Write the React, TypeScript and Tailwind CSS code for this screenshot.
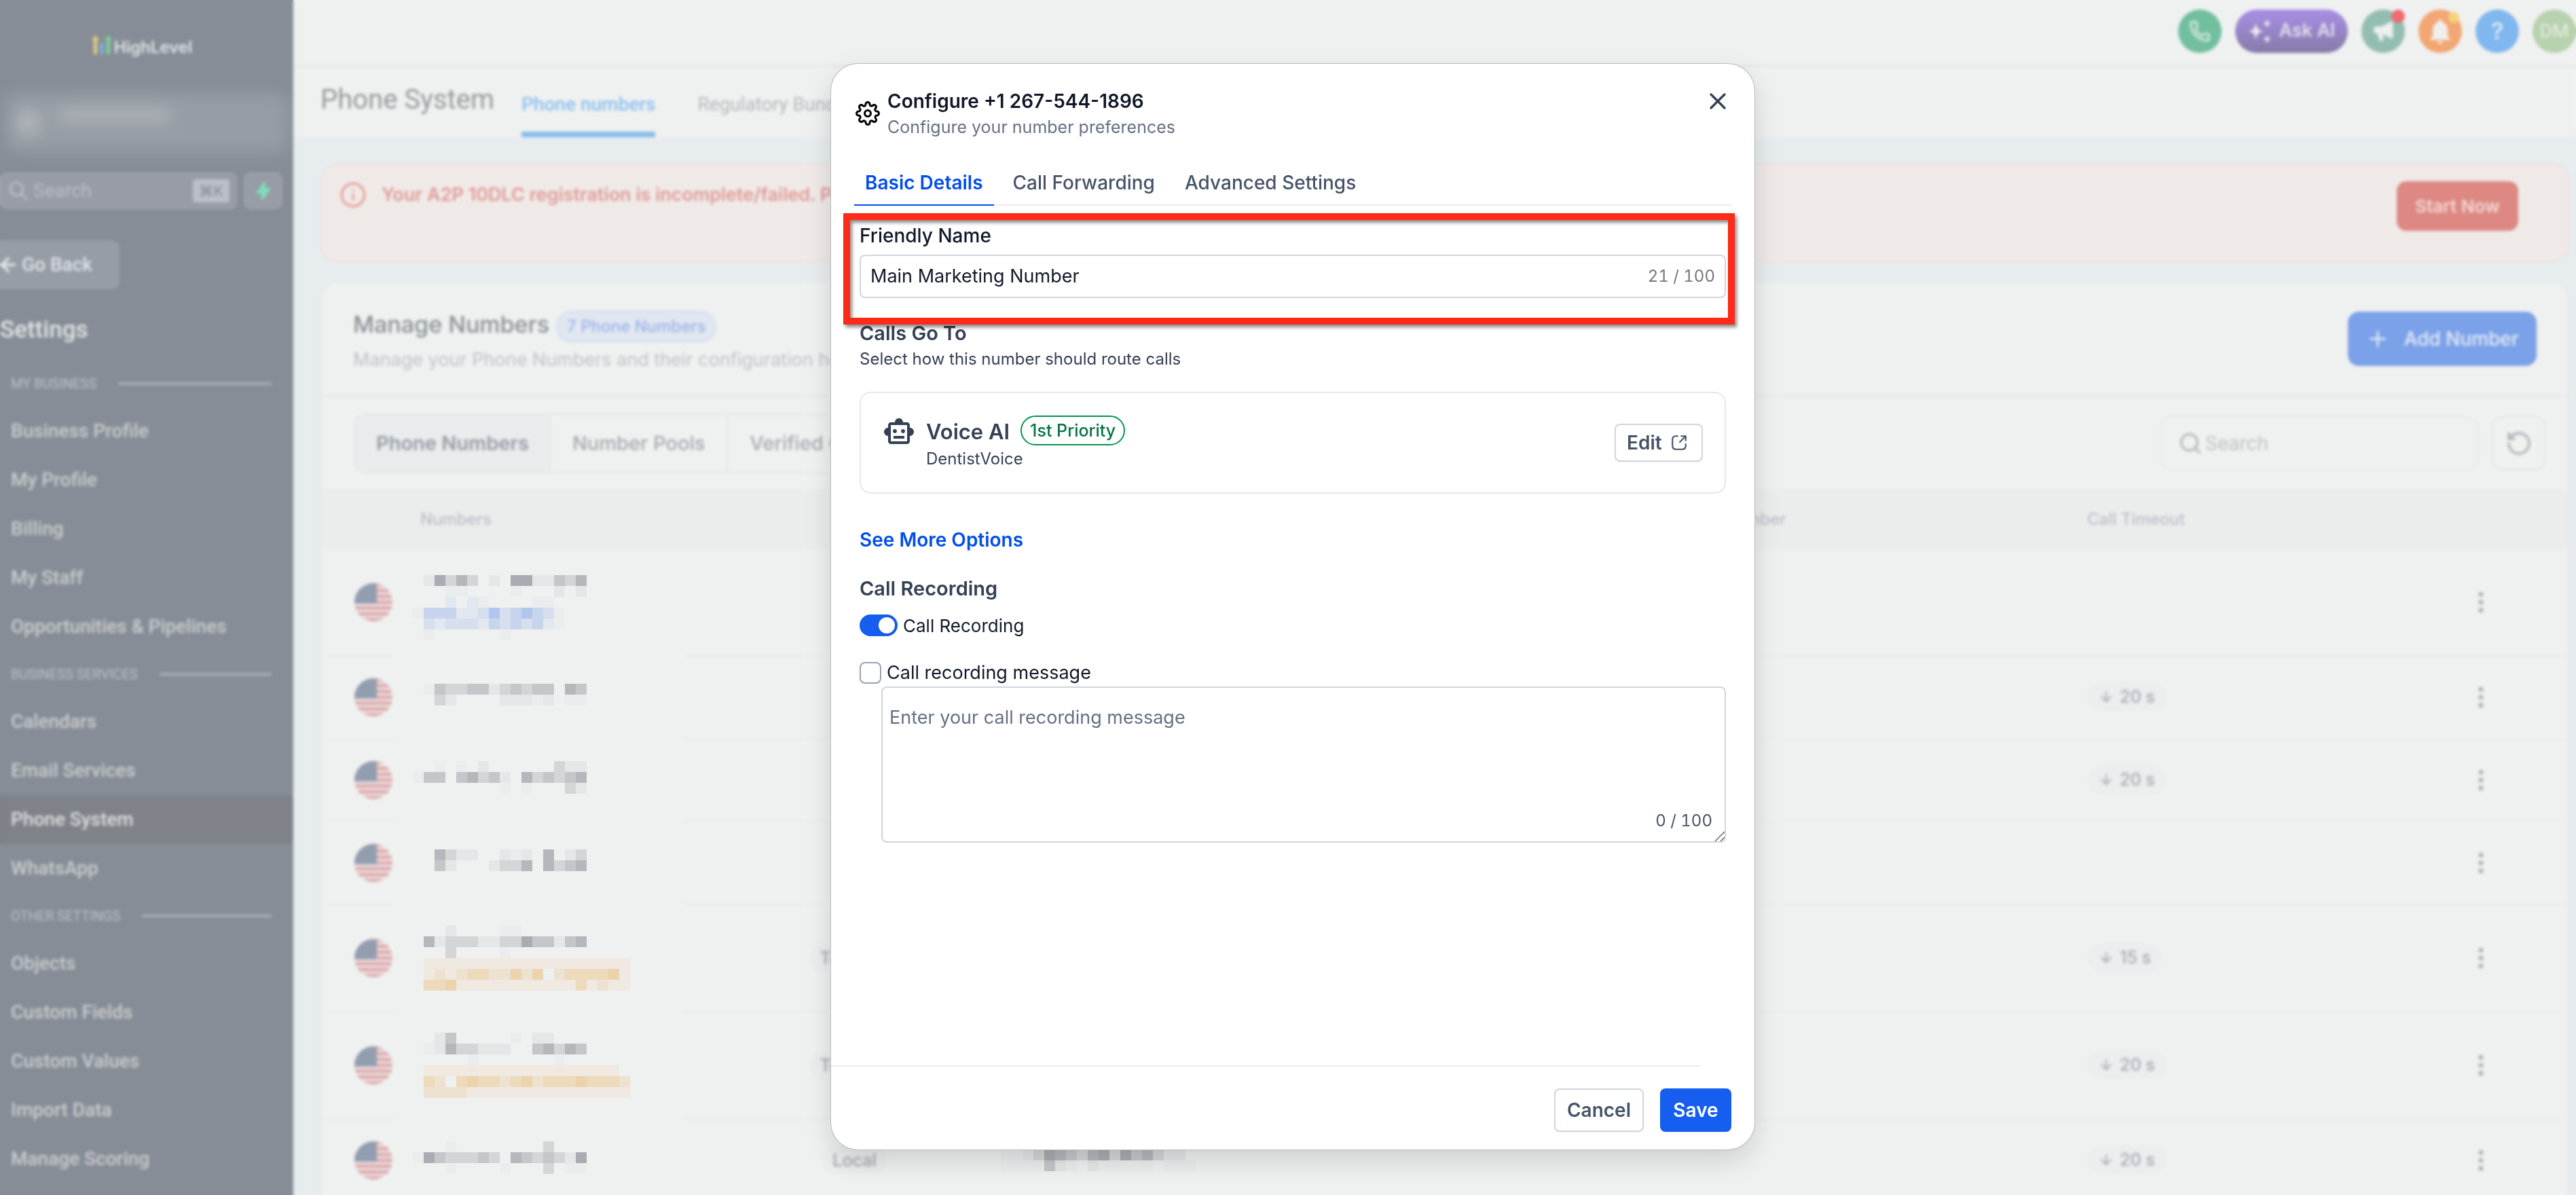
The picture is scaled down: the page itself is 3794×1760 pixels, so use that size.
import { useState } from "react";
import clsx from "clsx";
import { ArrowDown, ArrowLeft, EllipsisVertical, Info, Phone, Plus, RotateCcw, Search, X } from "lucide-react";
import { FiSettings } from "react-icons/fi";
import { HiLightningBolt, HiOutlineSearch, HiSpeakerphone } from "react-icons/hi";
import { MdNotifications, MdOutlineSmartToy } from "react-icons/md";

const sidebarGroups = [
  {
    title: "My Business",
    items: ["Business Profile", "My Profile", "Billing", "My Staff", "Opportunities & Pipelines"],
  },
  { title: "Business Services", items: ["Calendars", "Email Services", "Phone System", "WhatsApp"] },
  {
    title: "Other Settings",
    items: ["Objects", "Custom Fields", "Custom Values", "Import Data", "Manage Scoring"],
  },
];

// Each character is one 16px block of a redacted value
const blockColors: Record<string, string> = {
  a: "#a9acb2",
  b: "#b4b8bd",
  c: "#c4c7ca",
  d: "#d3d5d7",
  e: "#e4e6e8",
  f: "#eaecee",
  p: "#b1c6ec",
  q: "#c6d4ee",
  r: "#d7dfee",
  s: "#e2e8f0",
  w: "#ebd3ab",
  x: "#ecdabb",
  y: "#ede1cf",
  z: "#efe9e1",
};

type NumberRow = {
  blocks: string[];
  type?: string;
  detail?: string[];
  timeout?: string;
  tall?: boolean;
};

const rows: NumberRow[] = [
  {
    tall: true,
    blocks: [
      "                 ",
      "  eadbd e aaeecdb",
      "    ff    f   e e",
      "    s sf    ff   ",
      " fqqqssrprqpqrf  ",
      "  rsrrrsqrqrqsf  ",
      "  f      f       ",
    ],
  },
  {
    blocks: ["  fcddccedcdcc bc", "   de    eeefe ff"],
    timeout: "20 s",
  },
  {
    blocks: ["   f f e      dee", " fcc cbdce bdcdcb", "         f f   de"],
    timeout: "20 s",
  },
  { blocks: ["   bdee  efe b ed", "   ce   eddb bdcb"] },
  {
    tall: true,
    blocks: [
      "    e    ff      ",
      "  bedddeeddaccecb",
      "    d    f       ",
      "  zzzzzzzzzzzzzzzzzzz",
      "  zyzyxxyywyw yxxxxwz",
      "  xxwzzzzzzzzzzzxzyzz",
    ],
    type: "Toll Free",
    timeout: "15 s",
  },
  {
    tall: true,
    blocks: [
      "   ec     f ee   ",
      "  febddeee  cbdbc",
      "      f       f  ",
      "  zzzzzzzzzzzzzzzzzz ",
      "  xy xwxxyxwyxxxwxxxy",
      "  yyyyzzzzzzzzzzzzzzz",
    ],
    type: "Toll Free",
    timeout: "20 s",
  },
  {
    blocks: ["    f        d   ", " facdddcd bcdcdea", "    f    f   d ff"],
    type: "Local",
    detail: ["ffedabcdbadacbdee", "ffffcef efffff fff"],
    timeout: "20 s",
  },
];

function Blocks({ lines }: { lines: string[] }) {
  const cols = Math.max(...lines.map((line) => line.length));
  return (
    <svg
      width={cols * 16}
      height={lines.length * 16}
      viewBox={`0 0 ${cols} ${lines.length}`}
      shapeRendering="crispEdges"
      className="relative z-20 block"
      aria-hidden="true"
    >
      {lines.map((line, y) =>
        line
          .split("")
          .map((c, x) => (c === " " ? null : <rect key={`${x}-${y}`} x={x} y={y} width={1} height={1} fill={blockColors[c]} />))
      )}
    </svg>
  );
}

function Flag() {
  return (
    <svg viewBox="0 0 56 56" className="block size-14" role="img" aria-label="United States">
      <clipPath id="flag-clip">
        <circle cx="28" cy="28" r="28" />
      </clipPath>
      <g clipPath="url(#flag-clip)">
        <rect width="56" height="56" fill="#ecdfe0" />
        {[0, 1, 2, 3, 4, 5, 6].map((i) => (
          <rect key={i} y={i * 8.6} width="56" height="4.3" fill="#dba3a6" />
        ))}
        <rect width="33" height="30" fill="#929db0" />
      </g>
    </svg>
  );
}

function Logo() {
  return (
    <div className="flex items-start justify-center gap-[3px]">
      <svg width="30" height="28" viewBox="0 0 30 28" aria-hidden="true">
        <path d="M5.500 0 11 7H8V28H3V7H0z" fill="#e5cf79" />
        <path d="M15 10 20 16H17.500V28H12.500V16H10z" fill="#7fb0e0" />
        <path d="M24.500 0 30 7H27V28H22V7H19z" fill="#7ed39a" />
      </svg>
      <span className="pt-1 text-[24px] leading-7 font-semibold text-[#dfe2e4]">HighLevel</span>
    </div>
  );
}

function Sidebar() {
  return (
    <aside className="flex h-full w-[432px] shrink-0 flex-col overflow-hidden bg-[#868d96] font-[Roboto,sans-serif]">
      <div className="pt-[52px] pr-[14px] font-[Inter,sans-serif]">
        <Logo />
      </div>

      <div className="mx-2 mt-[54px] flex h-[86px] items-center gap-6 rounded-xl bg-[#969da5] px-4 blur-md">
        <span className="size-9 rounded-full bg-[#b4b8ba]" />
        <span className="mb-6 h-5 w-[168px] rounded-full bg-[#b0b4b7]" />
      </div>

      <div className="mt-[30px] flex gap-[10px]">
        <label className="flex h-[54px] w-[349px] items-center gap-[6px] rounded-[10px] border-2 border-[#9ea3ab] bg-[#979ca5] px-[9px]">
          <HiOutlineSearch className="size-8 shrink-0 text-[#bcc1c7]" />
          <input
            type="text"
            placeholder="Search"
            aria-label="Search menu"
            className="w-0 flex-1 text-[28px] leading-8 outline-none placeholder:text-[#b9bec4]"
          />
          <kbd className="flex h-[34px] w-[54px] items-center justify-center rounded-[4px] bg-[#bbc0c8] font-[Inter,'DejaVu_Sans',sans-serif] text-[22px] text-[#858b92]">
            ⌘K
          </kbd>
        </label>
        <button
          type="button"
          aria-label="Quick actions"
          className="flex h-[54px] w-[57px] items-center justify-center rounded-[10px] border-2 border-[#9ea3ab] bg-[#979ca5]"
        >
          <HiLightningBolt className="size-[30px] text-[#7fdcb8]" />
        </button>
      </div>

      <button
        type="button"
        className="mt-[46px] flex h-[72px] w-44 shrink-0 items-center rounded-r-xl bg-[#969da7] text-[28px] font-medium text-[#dfe2e4]"
      >
        <ArrowLeft className="-ml-1 mr-1 size-8" strokeWidth={3} />
        Go Back
      </button>

      <h2 className="mt-10 h-[65px] shrink-0 text-[35px] leading-[40px] font-medium text-[#dfe2e3]">Settings</h2>

      <nav>
        {sidebarGroups.map((group) => (
          <div key={group.title}>
            <div className="flex h-[68px] items-center gap-8 pr-8 pl-4">
              <h3 className="text-[20px] leading-8 text-[#bcc0c5] uppercase">{group.title}</h3>
              <span className="h-1 flex-1 bg-[#a8adb4]" />
            </div>
            {group.items.map((item) => (
              <a
                key={item}
                href="#"
                className={clsx(
                  "flex h-[72px] items-center rounded-r-lg pl-4 text-[28px] font-medium",
                  item === "Phone System" ? "bg-[#7f8289] text-[#dcdedf]" : "text-[#c9cccd]"
                )}
              >
                {item}
              </a>
            ))}
          </div>
        ))}
      </nav>
    </aside>
  );
}

function TopBar() {
  return (
    <div className="flex h-[99px] shrink-0 items-center justify-end gap-5 border-b-4 border-[#e7e9e8] pb-1">
      <button
        type="button"
        aria-label="Call"
        className="flex size-16 items-center justify-center rounded-full bg-[#72bf9f] text-[#e3efea]"
      >
        <Phone className="size-8" strokeWidth={2} />
      </button>
      <button
        type="button"
        className="flex h-16 w-[166px] items-center justify-center gap-3 rounded-full bg-linear-to-b from-[#a98ee6] to-[#877ba8] text-[27px] font-medium text-[#e9e6f1]"
      >
        <svg width="34" height="38" viewBox="0 0 34 36" fill="#eceaf2" aria-hidden="true">
          <path d="M11.500 5c1.500 9 3 11.500 11.500 13-8.500 1.500-10 4-11.500 13C10 22 8.500 19.500 0 18 8.500 16.500 10 14 11.500 5z" />
          <path d="M28 0c1 4 1.700 5.500 6 6.500-4.300 1-5 2.500-6 6.500-1-4-1.700-5.500-6-6.500C26.300 5.500 27 4 28 0z" />
          <path d="M28 23c1 4 1.700 5.500 6 6.500-4.300 1-5 2.500-6 6.500-1-4-1.700-5.500-6-6.500 4.300-1 5-2.500 6-6.500z" />
        </svg>
        Ask AI
      </button>
      <button
        type="button"
        aria-label="Announcements"
        className="relative flex size-16 items-center justify-center rounded-full bg-[#94bdb2] text-[#eaf0ee]"
      >
        <HiSpeakerphone className="size-9" />
        <span className="absolute top-0 right-0 size-5 rounded-full bg-[#ee6b6f]" />
      </button>
      <button
        type="button"
        aria-label="Notifications"
        className="relative flex size-16 items-center justify-center rounded-full bg-[#f2a673] text-[#f1efec]"
      >
        <MdNotifications className="size-11" />
        <span className="absolute top-1 right-1 size-4 rounded-full bg-[#f3d474]" />
      </button>
      <button
        type="button"
        aria-label="Help"
        className="flex size-16 items-center justify-center rounded-full bg-[#80b7ee] text-[34px] font-medium text-[#e3edf5]"
      >
        ?
      </button>
      <button
        type="button"
        aria-label="Account"
        className="flex size-16 items-center justify-center rounded-full bg-[#b8d1ae] font-[Roboto,sans-serif] text-[28px] text-[#e6ede3]"
      >
        DM
      </button>
    </div>
  );
}

function PageHeader() {
  return (
    <header className="flex h-[103px] shrink-0 items-stretch pl-10 font-[Roboto,sans-serif]">
      <h1 className="pt-6 text-[40px] leading-[48px] text-[#969a9c]">Phone System</h1>
      <nav className="ml-10 flex gap-[62px] text-[28px] leading-[40px]">
        <a href="#" className="border-b-8 border-[#86bbec] pt-[35px] font-medium text-[#8ec0ee]">
          Phone numbers
        </a>
        <a href="#" className="pt-[35px] text-[#b3b9ba]">
          Regulatory Bundles
        </a>
      </nav>
    </header>
  );
}

function Alert() {
  return (
    <section className="flex h-36 shrink-0 items-start rounded-3xl border-2 border-[#eedfde] bg-[#efeae8] pt-6 pr-[73px] pl-[26px]">
      <Info className="size-10 shrink-0 text-[#e59d98]" strokeWidth={2} />
      <p className="ml-[22px] flex-1 text-[27px] leading-10 font-semibold text-[#e09b97]">
        Your A2P 10DLC registration is incomplete/failed. Please
      </p>
      <button
        type="button"
        className="h-[73px] w-[179px] rounded-[14px] bg-[#dd8882] text-[26px] font-semibold text-[#f3d9d6]"
      >
        Start Now
      </button>
    </section>
  );
}

function NumbersTable() {
  return (
    <table className="w-full table-fixed border-separate border-spacing-0">
      <colgroup>
        <col className="w-[106px]" />
        <col className="w-[427px]" />
        <col className="w-[439px]" />
        <col />
        <col className="w-[659px]" />
        <col className="w-[541px]" />
        <col className="w-[184px]" />
      </colgroup>
      <thead className="bg-[#ebedec] text-left text-[24px] text-[#bbc0ca] [&_th]:h-[88px] [&_th]:border-y-2 [&_th]:border-[#e8eaec] [&_th]:font-medium">
        <tr>
          <th />
          <th className="pl-[39px]">Numbers</th>
          <th className="pl-16 text-center">Type</th>
          <th className="pl-7">Forward To</th>
          <th className="pl-1">Forwarding Number</th>
          <th className="pl-[17px]">Call Timeout</th>
          <th />
        </tr>
      </thead>
      <tbody className="text-[25px] font-medium text-[#a7abaf] [&_td]:border-b-2 [&_td]:border-[#e9ebec]">
        {rows.map((row, i) => (
          <tr key={i} className={row.tall ? "h-[158px]" : "h-[122px]"}>
            <td className="pl-12">
              <Flag />
            </td>
            <td className="border-transparent! pl-[12px]">
              <div className={row.tall ? "" : "pb-2"}>
                <Blocks lines={row.blocks} />
              </div>
            </td>
            <td className="pl-16 text-center">
              {row.type && <span className="inline-block rounded-full bg-[#ebedef] px-4 leading-[42px]">{row.type}</span>}
            </td>
            <td className="pl-7">{row.detail && <Blocks lines={row.detail} />}</td>
            <td />
            <td className="pl-[17px]">
              {row.timeout && (
                <span className="inline-flex h-[42px] items-center gap-2 rounded-full bg-[#ebedef] px-4">
                  <ArrowDown className="size-6" />
                  {row.timeout}
                </span>
              )}
            </td>
            <td className="pl-9">
              <button type="button" aria-label="More actions" className="block">
                <EllipsisVertical className="size-10" fill="currentColor" />
              </button>
            </td>
          </tr>
        ))}
      </tbody>
    </table>
  );
}

function NumbersCard() {
  return (
    <section className="mt-8 min-h-0 flex-1 overflow-hidden rounded-t-3xl border-x-2 border-[#e3e7e9] bg-[#eff1f0]">
      <div className="flex h-[168px] items-start justify-between border-b-4 border-[#e8eaec] pt-[38px] pr-[46px] pl-[46px]">
        <div>
          <div className="flex items-start gap-[10px]">
            <h2 className="text-[34px] leading-[46px] font-medium text-[#8b9197]">Manage Numbers</h2>
            <span className="mt-[3px] rounded-full border-2 border-[#cfdbf1] bg-[#e1e7f0] px-[14px] text-[24px] leading-[42px] font-medium text-[#9db4ea]">
              7 Phone Numbers
            </span>
          </div>
          <p className="mt-[6px] text-[27px] leading-[40px] text-[#bfc4cb]">
            Manage your Phone Numbers and their configuration here
          </p>
        </div>
        <button
          type="button"
          className="mt-1 flex h-20 w-[278px] items-center justify-center gap-5 rounded-2xl bg-[#7ba1e9] text-[28px] font-medium text-[#e4ebf5]"
        >
          <Plus className="size-9" strokeWidth={2} />
          Add Number
        </button>
      </div>

      <div className="flex h-[136px] items-center justify-between pr-8 pl-12">
        <div className="flex h-[88px] overflow-hidden rounded-2xl border-2 border-[#e3e5e8] text-[29px] font-medium text-[#a6abb1]">
          <button type="button" className="border-r-2 border-[#e3e5e8] bg-[#e9ebed] px-[30px] font-semibold text-[#979da4]">
            Phone Numbers
          </button>
          <button type="button" className="border-r-2 border-[#e3e5e8] px-8">
            Number Pools
          </button>
          <button type="button" className="px-8">
            Verified Caller IDs
          </button>
        </div>
        <div className="flex gap-5">
          <label className="flex h-20 w-[468px] items-center gap-1 rounded-2xl border-2 border-[#e5e7ea] px-6">
            <Search className="size-9 shrink-0 text-[#afb3b8]" strokeWidth={2} />
            <input
              type="text"
              placeholder="Search"
              aria-label="Search numbers"
              className="w-0 flex-1 text-[28px] outline-none placeholder:text-[#bcc1c5]"
            />
          </label>
          <button
            type="button"
            aria-label="Refresh"
            className="flex size-20 items-center justify-center rounded-2xl border-2 border-[#e3e5e8] text-[#acb0b5]"
          >
            <RotateCcw className="size-10" strokeWidth={2} />
          </button>
        </div>
      </div>

      <NumbersTable />
    </section>
  );
}

function ConfigureDialog() {
  const [name, setName] = useState("Main Marketing Number");
  const [recording, setRecording] = useState(true);
  const [message, setMessage] = useState("");

  return (
    <div
      role="dialog"
      aria-labelledby="dialog-title"
      className="flex h-[calc(100vh-161px)] w-[1360px] flex-col rounded-[40px] bg-white shadow-[0_0_0_1px_#b9bbbb,0_16px_40px_rgba(0,0,0,0.14)]"
    >
      <header className="flex items-start justify-between pt-[35px] pr-[34px] pl-9">
        <div className="flex items-center gap-[11px]">
          <FiSettings className="size-9 text-black" />
          <div>
            <h2 id="dialog-title" className="text-[28px] leading-10 font-semibold text-[#101828]">
              Configure +1 267-544-1896
            </h2>
            <p className="text-[25px] leading-9 text-[#667085]">Configure your number preferences</p>
          </div>
        </div>
        <button type="button" aria-label="Close" className="text-[#344054]">
          <X className="size-10" strokeWidth={2} />
        </button>
      </header>

      <nav className="mx-[34px] mt-11 flex gap-3 border-b-2 border-[#eaecf0] text-[28px] leading-10 font-medium text-[#475467]">
        <button type="button" className="-mb-[2px] border-b-2 border-[#004eeb] px-4 pb-3 font-semibold text-[#004eeb]">
          Basic Details
        </button>
        <button type="button" className="px-4 pb-3">
          Call Forwarding
        </button>
        <button type="button" className="px-4 pb-3">
          Advanced Settings
        </button>
      </nav>

      <form className="flex-1 px-[42px] pt-6">
        <div className="relative">
          <label htmlFor="friendly-name" className="block text-[28px] leading-10 font-medium text-[#101828]">
            Friendly Name
          </label>
          <div className="mt-2 flex h-16 items-center rounded-lg border-2 border-[#d0d5dd] px-[14px]">
            <input
              id="friendly-name"
              type="text"
              value={name}
              onChange={(e) => setName(e.target.value)}
              className="min-w-0 flex-1 text-[27px] text-[#101828] outline-none"
            />
            <span className="text-[24px] text-[#73787f] tabular-nums">{name.length} / 100</span>
          </div>
          <span className="pointer-events-none absolute -inset-x-6 -top-[13px] -right-[13px] -bottom-[39px] border-10 border-[#ff2a1a] shadow-[3px_4px_5px_rgba(0,0,0,0.45),inset_3px_4px_5px_rgba(0,0,0,0.45)]" />
        </div>

        <h3 className="mt-8 text-[29px] leading-10 font-semibold text-[#344054]">Calls Go To</h3>
        <p className="text-[24px] leading-9 text-[#344054]">Select how this number should route calls</p>

        <div className="mt-[30px] flex h-[150px] items-center justify-between rounded-2xl border-2 border-[#e6e8ec] px-8">
          <div className="flex gap-4 pt-1">
            <MdOutlineSmartToy className="-mt-[2px] size-12 text-[#344054]" />
            <div>
              <div className="flex items-start gap-4">
                <span className="text-[31px] leading-[44px] font-semibold text-[#344054]">Voice AI</span>
                <span className="-mt-[2px] rounded-full border-2 border-[#099250] px-3 text-[25px] leading-10 font-medium text-[#087443]">
                  1st Priority
                </span>
              </div>
              <p className="text-[24px] leading-9 text-[#344054]">DentistVoice</p>
            </div>
          </div>
          <button
            type="button"
            className="flex h-14 w-[130px] items-center gap-3 rounded-lg border-2 border-[#d0d5dd] pl-4 text-[28px] font-semibold text-[#475467] shadow-xs"
          >
            Edit
            <svg width="26" height="26" viewBox="0 0 24 24" fill="none" stroke="currentColor" strokeWidth="2" strokeLinecap="round" strokeLinejoin="round" aria-hidden="true">
              <path d="M21 9V3h-6M21 3l-8 8M10 3H7.800C4.300 3 3 4.300 3 7.800v8.400C3 19.700 4.300 21 7.800 21h8.400c3.500 0 4.800-1.300 4.800-4.800V14" />
            </svg>
          </button>
        </div>

        <button type="button" className="mt-12 block text-[28px] leading-10 font-semibold text-[#004eeb]">
          See More Options
        </button>

        <h3 className="mt-8 text-[29px] leading-10 font-semibold text-[#344054]">Call Recording</h3>
        <label className="mt-4 flex h-9 w-fit items-center gap-2 text-[26px] text-[#101828]">
          <input
            type="checkbox"
            role="switch"
            checked={recording}
            onChange={(e) => setRecording(e.target.checked)}
            className="h-8 w-14 appearance-none rounded-full bg-[#98a2b3] p-1 before:block before:size-6 before:rounded-full before:bg-white before:shadow-sm checked:bg-[#155eef] checked:before:ml-6"
          />
          Call Recording
        </label>

        <label className="mt-9 flex h-8 w-fit items-center gap-2 text-[27px] leading-8 text-[#101828]">
          <input type="checkbox" className="size-8 appearance-none rounded-lg border-2 border-[#98a2b3] checked:bg-[#155eef]" />
          Call recording message
        </label>
        <div className="relative mt-1 ml-8">
          <textarea
            aria-label="Call recording message"
            placeholder="Enter your call recording message"
            value={message}
            onChange={(e) => setMessage(e.target.value)}
            className="block h-[230px] w-full resize-none rounded-lg border-2 border-[#d0d5dd] px-[10px] pt-6 text-[27px] leading-10 text-[#101828] outline-none placeholder:text-[#667085]"
          />
          <span className="pointer-events-none absolute right-5 bottom-3 text-[24px] leading-10 text-[#475467] tabular-nums">
            {message.length} / 100
          </span>
          <svg width="16" height="16" viewBox="0 0 16 16" className="absolute right-[1px] bottom-[1px]" stroke="#6b6b6b" strokeWidth="1.5" aria-hidden="true">
            <path d="M1 15 15 1M9 15l6-6" />
          </svg>
        </div>
      </form>

      <footer>
        <hr className="mr-[79px] border-t-2 border-[#eaecf0]" />
        <div className="flex justify-end gap-6 pt-8 pr-[34px] pb-[26px] text-[28px] font-semibold">
          <button type="button" className="h-16 w-[132px] rounded-lg border-2 border-[#d0d5dd] text-[#475467] shadow-xs">
            Cancel
          </button>
          <button type="button" className="h-16 w-[105px] rounded-lg bg-[#155eef] text-white shadow-xs">
            Save
          </button>
        </div>
      </footer>
    </div>
  );
}

export default function App() {
  return (
    <div className="flex h-screen overflow-hidden bg-[#e7ecee] font-[Inter,sans-serif]">
      <Sidebar />
      <main className="flex min-w-0 flex-1 flex-col">
        <div className="bg-[#eff1f0]">
          <TopBar />
          <PageHeader />
        </div>
        <div className="flex min-h-0 flex-1 flex-col pt-[39px] pr-[10px] pl-10">
          <Alert />
          <NumbersCard />
        </div>
      </main>

      {/* softens everything behind the dialog except the redacted values */}
      <div className="fixed inset-0 z-10 backdrop-blur-[2px]" />
      <div className="fixed inset-0 z-30 flex items-start justify-center pt-[94px] pl-[14px]">
        <ConfigureDialog />
      </div>
    </div>
  );
}
